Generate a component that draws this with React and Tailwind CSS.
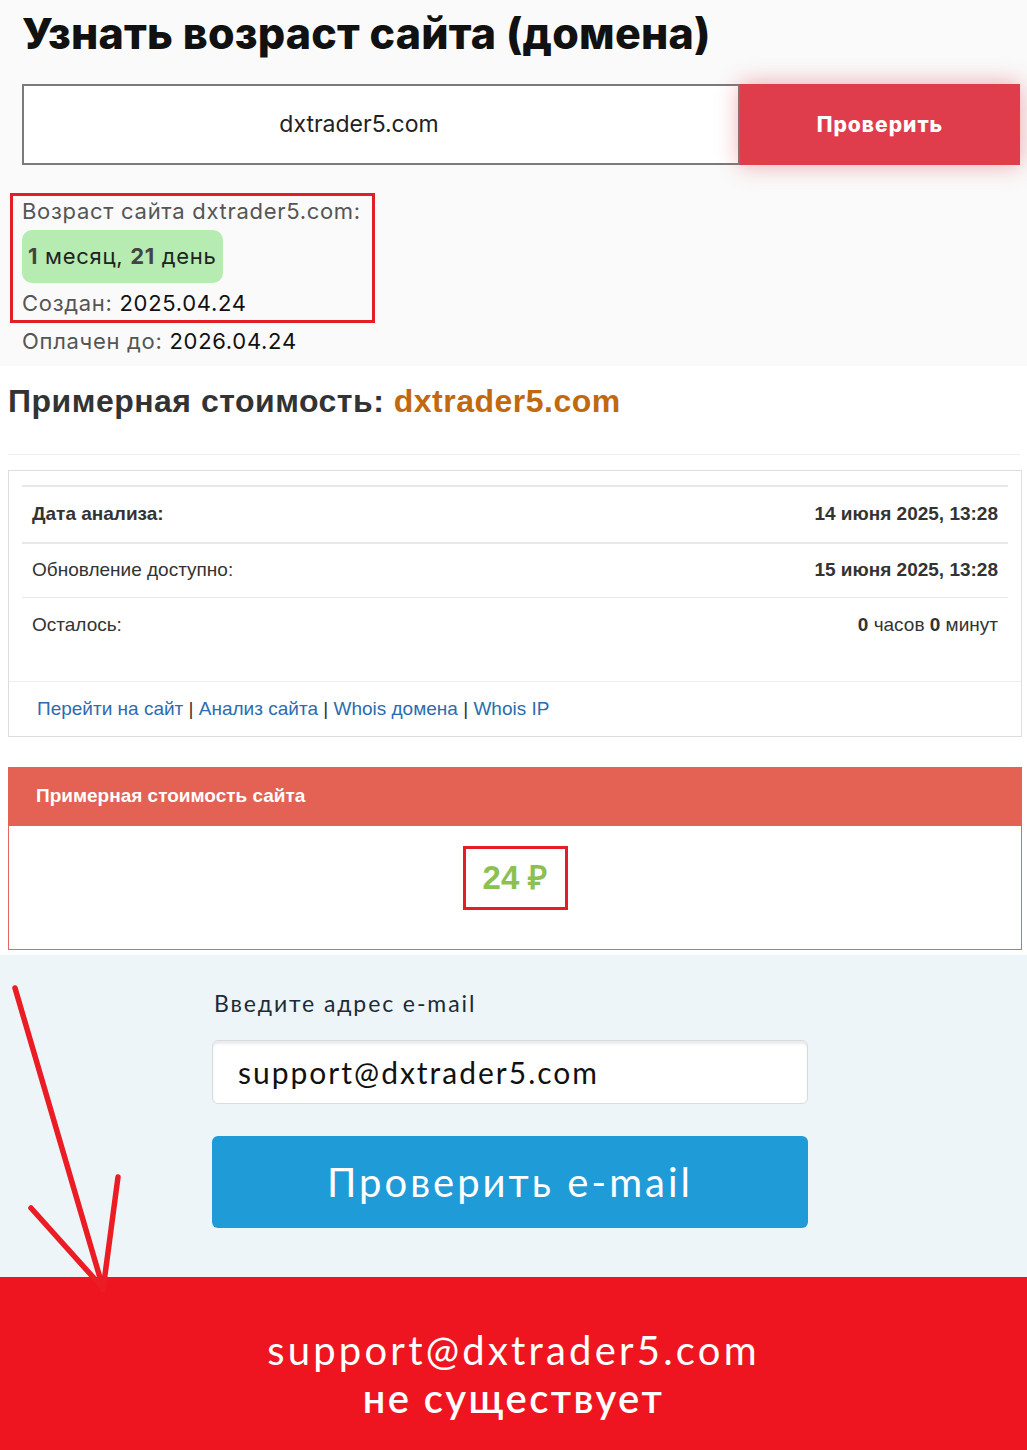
export default function App() {
  const rows = [
    { label: "Дата анализа:", value: "14 июня 2025, 13:28", bold: true, h: "h-[57px]" },
    { label: "Обновление доступно:", value: "15 июня 2025, 13:28", h: "h-[55px]" },
  ];

  return (
    <div className="relative w-full overflow-hidden bg-white">
      {/* domain age block */}
      <section className="bg-[#fafafa] pt-[8px] pb-[10px] font-['Inter',sans-serif]">
        <h1 className="pl-[22px] text-[43px] leading-[50px] font-extrabold tracking-[0.2px] text-[#111]">
          Узнать возраст сайта (домена)
        </h1>
        <div className="mt-[26px] ml-[22px] mr-[7px] flex h-[81px]">
          <div className="flex flex-1 items-center justify-center border-2 border-[#7a7a7a] bg-white pr-[44px] text-[23px] text-[#222]">
            dxtrader5.com
          </div>
          <button className="w-[280px] bg-[#df3d4c] text-[21px] font-extrabold tracking-[1px] text-white shadow-[0_0_22px_rgba(223,61,76,0.45)]">
            Проверить
          </button>
        </div>
        <div className="mt-[28px] ml-[10px] w-[365px] border-[3px] border-[#e31e26] pl-[9px] pb-[2px] text-[22px] tracking-[0.7px]">
          <div className="leading-[30px] text-[#555]">Возраст сайта dxtrader5.com:</div>
          <div className="mt-[4px] inline-flex h-[53px] items-center rounded-[10px] bg-[#b6ebb1] px-[6px] text-[#222]">
            <b className="text-[#444]">1</b>&nbsp;месяц,&nbsp;<b className="text-[#444]">21</b>&nbsp;день
          </div>
          <div className="mt-[5px] leading-[30px] text-[#555]">
            Создан: <span className="text-[#111]">2025.04.24</span>
          </div>
        </div>
        <div className="mt-[3px] pl-[22px] text-[22px] tracking-[0.7px] leading-[30px] text-[#555]">
          Оплачен до: <span className="text-[#111]">2026.04.24</span>
        </div>
      </section>

      {/* price estimate block */}
      <section className="bg-white pt-[20px] pb-[5px] font-['Liberation_Sans',Arial,sans-serif]">
        <h2 className="px-[8px] text-[32px] leading-[30px] font-bold tracking-[0.5px] text-[#333]">
          Примерная стоимость: <span className="text-[#c0690f]">dxtrader5.com</span>
        </h2>
        <div className="mt-[38px] ml-[8px] mr-[7px] border-t border-[#eee]" />
        <div className="mt-[15px] ml-[8px] mr-[5px] border border-[#ddd]">
          <div className="mx-[13px] mt-[14px] pb-[28px] text-[19px] text-[#333]">
            {rows.map((r) => (
              <div
                key={r.label}
                className={`flex ${r.h} items-center justify-between border-t-2 border-[#e8e8e8] px-[10px]`}
              >
                <span className={r.bold ? "font-bold" : ""}>{r.label}</span>
                <span className="font-bold">{r.value}</span>
              </div>
            ))}
            <div className="flex h-[56px] items-center justify-between border-t border-[#e8e8e8] px-[10px]">
              <span>Осталось:</span>
              <span>
                <b>0</b> часов <b>0</b> минут
              </span>
            </div>
          </div>
          <div className="flex h-[55px] items-center border-t border-[#eee] px-[28px] text-[19px] text-[#333]">
            <a className="text-[#2b6cb0]">Перейти на сайт</a>&nbsp;|&nbsp;
            <a className="text-[#2b6cb0]">Анализ сайта</a>&nbsp;|&nbsp;
            <a className="text-[#2b6cb0]">Whois домена</a>&nbsp;|&nbsp;
            <a className="text-[#2b6cb0]">Whois IP</a>
          </div>
        </div>

        <div className="mt-[30px] ml-[8px] mr-[5px]">
          <div className="flex h-[59px] items-center bg-[#e36254] px-[28px] text-[19px] font-bold text-white">
            Примерная стоимость сайта
          </div>
          <div className="flex h-[124px] justify-center border border-t-0 border-[#e06a5e] bg-white pt-[20px]">
            <div className="flex h-[64px] w-[105px] items-center justify-center border-[3px] border-[#e31e26] text-[33px] font-bold text-[#8cc152]">
              24 ₽
            </div>
          </div>
        </div>
      </section>

      {/* email check block */}
      <section className="bg-[#eef5f9] pt-[33px] pb-[49px] font-['Lato',sans-serif]">
        <div className="ml-[212px] w-[596px]">
          <div className="pl-[2px] text-[23px] leading-[30px] tracking-[1.9px] text-[#1d2b36]">Введите адрес e-mail</div>
          <div className="mt-[22px] flex h-[64px] items-center rounded-[6px] border border-[#d6dde2] bg-white px-[25px] text-[30px] tracking-[2px] text-[#111] shadow-[inset_0_3px_2px_rgba(0,0,0,0.08)]">
            support@dxtrader5.com
          </div>
          <button className="mt-[32px] flex h-[92px] w-full items-center justify-center rounded-[6px] bg-[#1f9bd7] text-[40px] tracking-[3px] text-white">
            Проверить e-mail
          </button>
        </div>
      </section>

      {/* result */}
      <section className="flex h-[173px] flex-col items-center bg-[#ef1520] pt-[49px] font-['Lato',sans-serif] text-[40px] leading-[48px] tracking-[3.2px] text-white">
        <div>support@dxtrader5.com</div>
        <div className="font-semibold tracking-[2.4px]">не существует</div>
      </section>

      {/* annotation arrow */}
      <svg
        className="pointer-events-none absolute left-0 top-[960px]"
        width="140"
        height="340"
        viewBox="0 960 140 340"
      >
        <g stroke="#ec1c24" strokeWidth="5.5" strokeLinecap="round" fill="none">
          <path d="M15 988 L103 1288" />
          <path d="M31 1208 L101 1286" />
          <path d="M118 1177 L103 1290" />
        </g>
      </svg>
    </div>
  );
}
